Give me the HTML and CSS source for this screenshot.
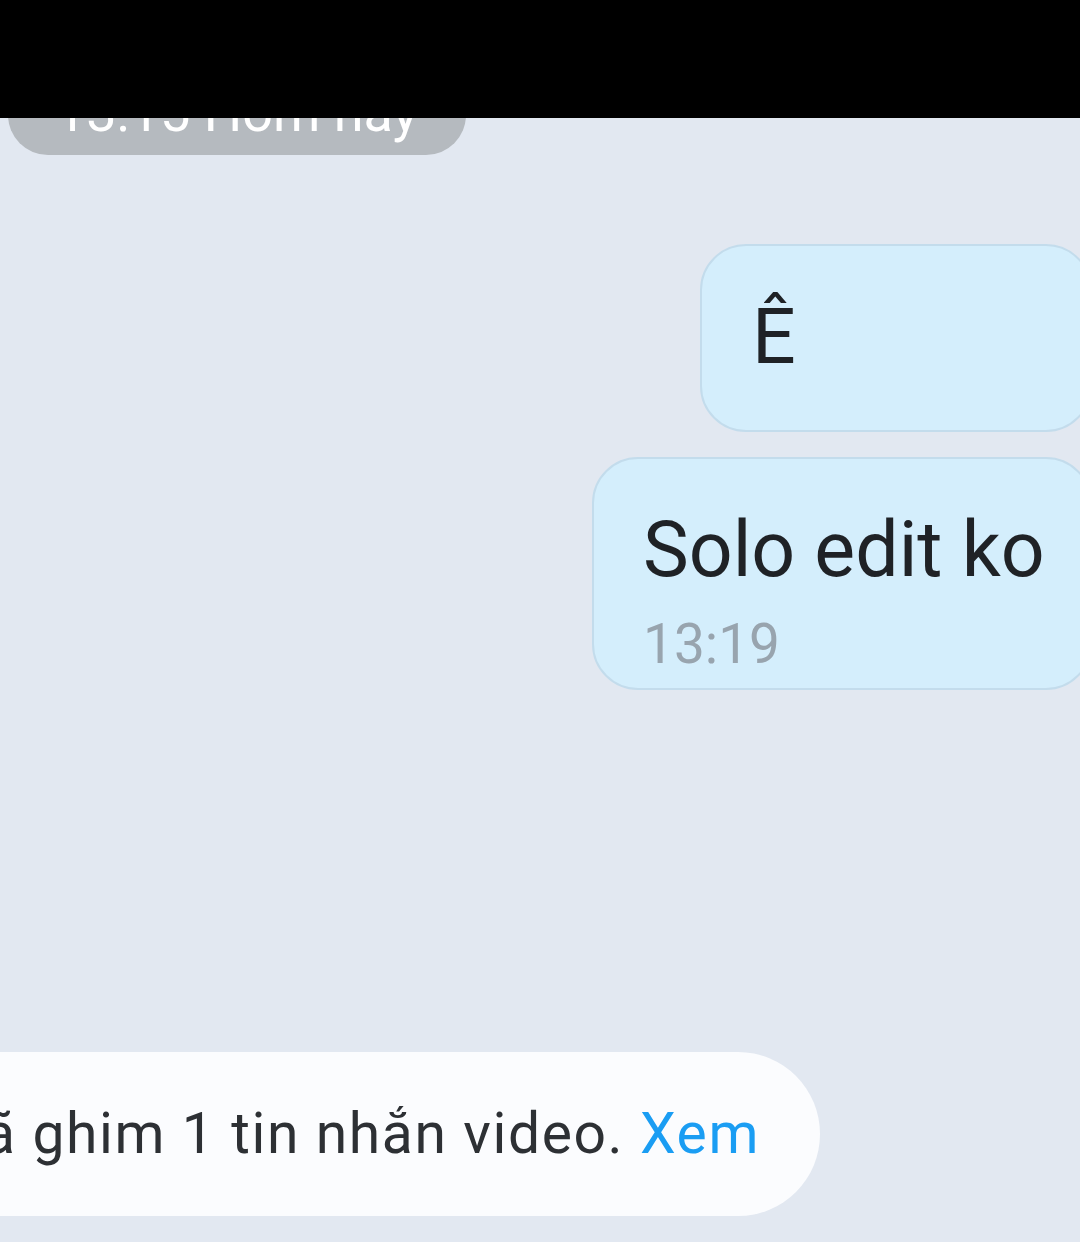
FILE: index.html
```html
<!DOCTYPE html>
<html lang="vi">
<head>
<meta charset="utf-8">
<title>Chat</title>
<link rel="stylesheet" href="styles.css">
</head>
<body>
<div class="screen">
  <div class="statusbar"></div>
  <div class="chat">
    <div class="date-pill">13:15 Hôm nay</div>
    <div class="bubble bubble-short">
      <div class="msg">Ê</div>
    </div>
    <div class="bubble bubble-long">
      <div class="msg">Solo edit ko</div>
      <div class="time">13:19</div>
    </div>
    <div class="notice-row">
      <div class="notice">Bạn đã ghim 1 tin nhắn video. <span class="link">Xem</span></div>
    </div>
  </div>
</div>
</body>
</html>
```
FILE: styles.css
```css
* { box-sizing: border-box; }
html, body { margin: 0; padding: 0; }
body {
  width: 1080px;
  height: 1242px;
  overflow: hidden;
  background: #e2e8f1;
  font-family: Roboto, "Noto Sans", "Liberation Sans", sans-serif;
}
.screen {
  display: flex;
  flex-direction: column;
  height: 1242px;
}
.statusbar {
  height: 118px;
  background: #000;
  flex-shrink: 0;
}
.chat {
  flex: 1;
  overflow: hidden;
  display: flex;
  flex-direction: column;
  background: #e2e8f1;
}
.date-pill {
  margin-top: -43px;
  margin-left: 8px;
  width: 458px;
  height: 80px;
  border-radius: 40px;
  background: #b5babf;
  color: #fff;
  font-size: 54px;
  line-height: 76px;
  text-align: center;
  flex-shrink: 0;
}
.bubble {
  align-self: flex-end;
  margin-right: -12px;
  background: #d4eefc;
  border: 2px solid #c3dcec;
  border-radius: 46px;
  flex-shrink: 0;
  color: #1f2226;
}
.bubble-short {
  margin-top: 89px;
  width: 392px;
  height: 188px;
  padding: 44px 0 0 50px;
}
.bubble-long {
  margin-top: 25px;
  width: 500px;
  height: 233px;
  padding: 44px 0 0 49px;
}
.msg {
  font-size: 77px;
  line-height: 94px;
  white-space: nowrap;
}
.time {
  font-size: 55px;
  line-height: 66px;
  color: #98a4ae;
  margin-top: 14px;
}
.notice-row {
  display: flex;
  justify-content: flex-end;
  width: 820px;
  margin-top: 362px;
  flex-shrink: 0;
}
.notice {
  flex-shrink: 0;
  height: 164px;
  border-radius: 82px;
  background: #fbfcfe;
  padding: 0 60px 0 60px;
  font-size: 57px;
  letter-spacing: 1.6px;
  line-height: 164px;
  color: #2d3034;
  white-space: nowrap;
}
.link { color: #1a9df3; }
```
